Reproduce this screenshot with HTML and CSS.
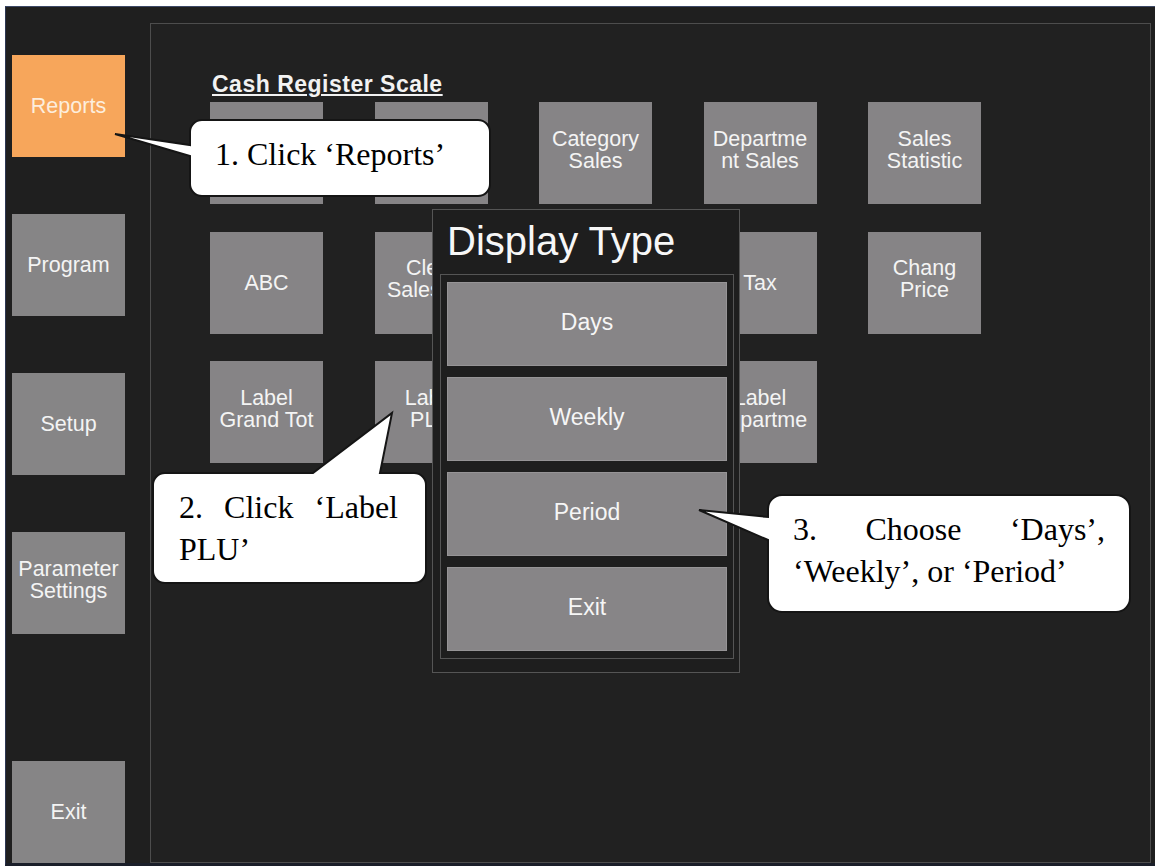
FILE: index.html
```html
<!DOCTYPE html>
<html lang="en">
<head>
<meta charset="utf-8">
<title>Cash Register Scale - Reports</title>
<link rel="stylesheet" href="styles.css">
</head>
<body>
<div class="page">
  <div class="screen">
    <nav class="sidebar">
      <div class="side-btn active">Reports</div>
      <div class="side-btn">Program</div>
      <div class="side-btn">Setup</div>
      <div class="side-btn two">Parameter<br>Settings</div>
      <div class="side-btn exit">Exit</div>
    </nav>
    <main class="panel">
      <h1 class="title">Cash Register Scale</h1>
      <div class="grid">
        <div class="tile"></div>
        <div class="tile"></div>
        <div class="tile two">Category<br>Sales</div>
        <div class="tile two">Departme<br>nt Sales</div>
        <div class="tile two">Sales<br>Statistic</div>

        <div class="tile">ABC</div>
        <div class="tile two">Clerk<br>Sales Tot</div>
        <div class="tile"></div>
        <div class="tile">Tax</div>
        <div class="tile two">Chang<br>Price</div>

        <div class="tile two">Label<br>Grand Tot</div>
        <div class="tile two">Label<br>PLU</div>
        <div class="tile"></div>
        <div class="tile two">Label<br>Departme</div>
      </div>
    </main>
  </div>

  <div class="dialog">
    <div class="dialog-title">Display Type</div>
    <div class="dialog-body">
      <div class="dlg-btn">Days</div>
      <div class="dlg-btn">Weekly</div>
      <div class="dlg-btn">Period</div>
      <div class="dlg-btn">Exit</div>
    </div>
  </div>

  <svg class="callouts" width="1158" height="867" viewBox="0 0 1158 867" xmlns="http://www.w3.org/2000/svg">
    <path d="M 202 120 H 478 A 12 12 0 0 1 490 132 V 184 A 12 12 0 0 1 478 196 H 202 A 12 12 0 0 1 190 184 V 156 L 115 134 L 190 145 V 132 A 12 12 0 0 1 202 120 Z"/>
    <path d="M 165 473 H 313 L 392 413 L 380 473 H 414 A 12 12 0 0 1 426 485 V 571 A 12 12 0 0 1 414 583 H 165 A 12 12 0 0 1 153 571 V 485 A 12 12 0 0 1 165 473 Z"/>
    <path d="M 782 495 H 1116 A 14 14 0 0 1 1130 509 V 598 A 14 14 0 0 1 1116 612 H 782 A 14 14 0 0 1 768 598 V 540 L 699 510 L 768 517 V 509 A 14 14 0 0 1 782 495 Z"/>
  </svg>

  <div class="note note1">1. Click ‘Reports’</div>
  <div class="note note2">2. Click ‘Label PLU’</div>
  <div class="note note3">3. Choose ‘Days’, ‘Weekly’, or ‘Period’</div>
</div>
</body>
</html>
```

FILE: styles.css
```css
html, body {
  margin: 0;
  padding: 0;
  background: #ffffff;
}

.page {
  position: relative;
  width: 1158px;
  height: 867px;
  box-sizing: border-box;
  padding: 6px 0 0 5px;
  overflow: hidden;
  background: #ffffff;
  font-family: "Liberation Sans", Arial, sans-serif;
}

.screen {
  width: 1150px;
  height: 860px;
  box-sizing: border-box;
  border-top: 1px solid #3d4966;
  border-left: 1px solid #2c3652;
  border-bottom: 3px solid #1a1e29;
  background: #1f1f1f;
  display: flex;
}

/* ---------- sidebar ---------- */
.sidebar {
  flex: none;
  width: 144px;
  box-sizing: border-box;
  padding: 48px 0 0 6px;
  display: flex;
  flex-direction: column;
  gap: 57px;
}

.side-btn {
  width: 113px;
  height: 102px;
  flex: none;
  background: #868586;
  color: #f4f4f4;
  font-size: 21.5px;
  line-height: 22px;
  display: flex;
  align-items: center;
  justify-content: center;
  text-align: center;
  box-sizing: border-box;
}

.side-btn.active {
  background: #f7a65b;
  color: #fdeedd;
}

.side-btn.two {
  padding-bottom: 7px;
}

.side-btn.exit {
  margin-top: auto;
}

/* ---------- main panel ---------- */
.panel {
  flex: none;
  margin-top: 16px;
  width: 1001px;
  height: 840px;
  box-sizing: border-box;
  border: 1px solid #4d4d4d;
  background: #212121;
  padding: 47px 0 0 59px;
}

.title {
  margin: 0 0 5px 2px;
  font-size: 23px;
  line-height: 26px;
  font-weight: bold;
  letter-spacing: 0.5px;
  color: #f2f2f2;
  text-decoration: underline;
  text-underline-offset: 2px;
  text-decoration-thickness: 2px;
}

.grid {
  display: grid;
  grid-template-columns: repeat(5, 113px);
  grid-template-rows: repeat(3, 102px);
  column-gap: 51.5px;
  row-gap: 27.5px;
}

.tile {
  background: #868486;
  color: #f4f4f4;
  font-size: 21.5px;
  line-height: 22px;
  display: flex;
  align-items: center;
  justify-content: center;
  text-align: center;
  white-space: nowrap;
  overflow: hidden;
  box-sizing: border-box;
}

.tile.two {
  padding-bottom: 7px;
}

/* ---------- dialog ---------- */
.dialog {
  position: absolute;
  left: 432px;
  top: 209px;
  width: 308px;
  box-sizing: border-box;
  border: 1px solid #555555;
  background: #1e1e1e;
  padding: 7px 5px 13px 7px;
}

.dialog-title {
  color: #f7f7f7;
  font-size: 40px;
  line-height: 48px;
  padding-left: 7px;
  margin-bottom: 9px;
}

.dialog-body {
  border: 1px solid #555555;
  padding: 7px 6px;
  display: flex;
  flex-direction: column;
  gap: 11px;
}

.dlg-btn {
  height: 84px;
  box-sizing: border-box;
  border: 1px solid #969496;
  background: #878587;
  color: #f6f6f6;
  font-size: 23px;
  display: flex;
  align-items: center;
  justify-content: center;
  padding-bottom: 4px;
}

/* ---------- callouts ---------- */
.callouts {
  position: absolute;
  left: 0;
  top: 0;
  pointer-events: none;
}

.callouts path {
  fill: #ffffff;
  stroke: #151515;
  stroke-width: 2;
  stroke-linejoin: miter;
}

.note {
  position: absolute;
  font-family: "Liberation Serif", "Times New Roman", serif;
  font-size: 32px;
  line-height: 42px;
  color: #000000;
  text-align: justify;
}

.note1 {
  left: 215px;
  top: 133px;
  width: 260px;
  white-space: nowrap;
  text-align: left;
}

.note2 {
  left: 179px;
  top: 486px;
  width: 219px;
}

.note3 {
  left: 793px;
  top: 508px;
  width: 312px;
}
```
